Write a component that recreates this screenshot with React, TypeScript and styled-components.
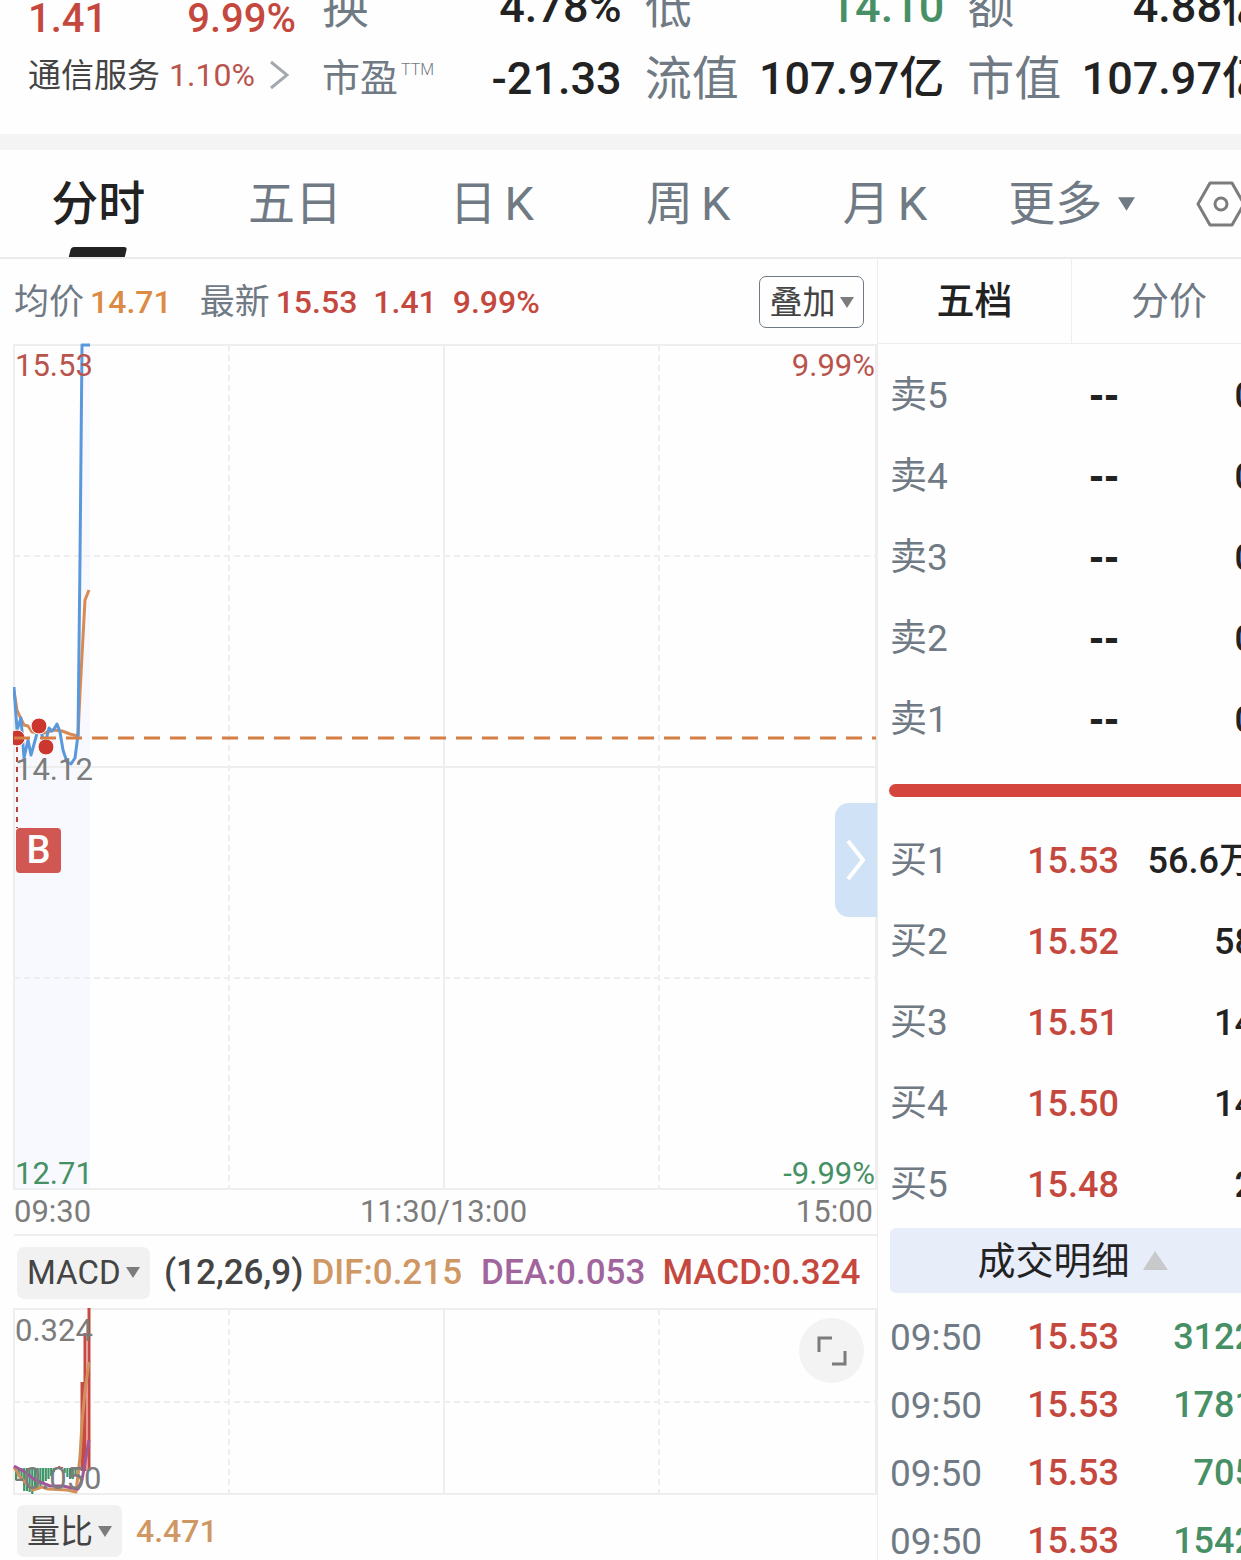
import React, { useState } from "react";
import styled, { createGlobalStyle } from "styled-components";

const color = {
  ink: "#222222",
  text: "#444444",
  slate: "#707a84",
  grey: "#7c7c7c",
  red: "#c5483f",
  redSoft: "#b9544d",
  green: "#479065",
  orange: "#dc8b45",
  tan: "#cf9763",
  purple: "#9f659c",
  blue: "#5a98dc",
  line: "#eeeeee",
};

const GlobalStyle = createGlobalStyle`
  * { box-sizing: border-box; }
  body { margin: 0; background: #fefefe; }
  body, button, select {
    font-family: Roboto, "Noto Sans CJK SC", sans-serif;
    line-height: 1;
  }
  button, select {
    border: 0; margin: 0; padding: 0; background: none; color: inherit; cursor: pointer;
  }
`;

const Viewport = styled.div`
  height: 100vh;
  overflow: hidden;
  background: #fefefe;
`;

/* The sheet bleeds past the right edge of the window. */
const Sheet = styled.div`
  width: calc(100% + 39px);
`;

const Header = styled.header`
  height: 134px;
  overflow: hidden;
  display: grid;
  grid-template-columns: 271px repeat(3, minmax(0, 1fr));
  column-gap: 23px;
  align-items: end;
  align-content: end;
  padding: 0 13px 20px 28px;
`;

const Quote = styled.div`
  padding-bottom: 11px;
`;

const QuoteRow = styled.div`
  display: flex;
  align-items: center;
  justify-content: space-between;
  height: 56px;
  padding-right: 3px;
  font-size: 40px;
  font-weight: 500;
  color: ${color.red};
`;

const Sector = styled.a`
  display: flex;
  align-items: center;
  height: 56px;
  gap: 9px;
  font-size: 33px;
  color: ${color.text};
  text-decoration: none;
  white-space: nowrap;
`;

const SectorChange = styled.span`
  font-size: 32px;
  color: ${color.redSoft};
`;

const Chevron = styled.svg`
  width: 20px;
  height: 30px;
  margin-left: 5px;
`;

const Stats = styled.dl`
  margin: 0;
`;

const Stat = styled.div`
  display: flex;
  align-items: center;
  justify-content: space-between;
  height: 72px;
  white-space: nowrap;
`;

const StatName = styled.dt<{ $small?: boolean }>`
  font-size: ${(p) => (p.$small ? 38 : 47)}px;
  color: ${color.slate};
`;

const Sup = styled.sup`
  font-size: 16px;
  font-weight: 300;
  line-height: 16px;
  vertical-align: 16px;
  margin-left: 3px;
`;

const StatValue = styled.dd<{ $tone?: string }>`
  margin: 0;
  font-size: 45px;
  font-weight: 500;
  color: ${(p) => p.$tone ?? color.ink};
`;

const Divider = styled.div`
  height: 16px;
  background: #f4f4f4;
`;

const Tabs = styled.nav`
  display: grid;
  grid-template-columns: repeat(6, minmax(0, 1fr)) 82px;
  height: 109px;
  padding-right: 18px;
  border-bottom: 2px solid #ebebeb;
`;

const Tab = styled.button<{ $on: boolean; $menu: boolean }>`
  position: relative;
  display: flex;
  align-items: center;
  justify-content: center;
  gap: ${(p) => (p.$menu ? 16 : 8)}px;
  padding-right: ${(p) => (p.$menu ? 20 : 0)}px;
  font-size: 47px;
  font-weight: ${(p) => (p.$on ? 500 : 400)};
  color: ${(p) => (p.$on ? color.ink : color.slate)};
  white-space: nowrap;

  &::after {
    content: "";
    visibility: ${(p) => (p.$on ? "visible" : "hidden")};
    position: absolute;
    bottom: 0;
    left: 50%;
    width: 56px;
    height: 10px;
    margin-left: -28px;
    border-radius: 3px 3px 0 0;
    transform: skewX(-14deg);
    background: ${color.ink};
  }
`;

const Settings = styled.button`
  display: flex;
  align-items: center;
  justify-content: center;
`;

const Main = styled.main`
  display: grid;
  grid-template-columns: minmax(0, 1fr) 402px;
`;

const Charts = styled.section`
  position: relative;
  min-width: 0;
  padding-left: 14px;
  border-right: 1px solid ${color.line};
`;

const InfoRow = styled.div`
  display: flex;
  align-items: center;
  height: 86px;
  padding-right: 13px;
  font-size: 32px;
  font-weight: 500;
  color: ${color.red};
  white-space: nowrap;
`;

const InfoName = styled.span`
  margin-right: 6px;
  font-size: 35px;
  font-weight: 400;
  color: ${color.slate};
`;

const InfoValue = styled.span<{ $tone?: string; $gap?: number }>`
  color: ${(p) => p.$tone ?? color.red};
  margin-right: ${(p) => p.$gap ?? 16}px;
`;

const Overlay = styled.button`
  display: flex;
  align-items: center;
  justify-content: center;
  gap: 4px;
  width: 105px;
  height: 52px;
  margin-left: auto;
  border: 1px solid ${color.slate};
  border-radius: 7px;
  font-size: 33px;
  color: ${color.text};
`;

const Plot = styled.div`
  position: relative;
`;

const PlotSvg = styled.svg`
  display: block;
  width: 100%;
  height: auto;
  overflow: visible;
`;

const PlotLabel = styled.span<{ $top?: number; $right?: boolean; $tone?: string }>`
  position: absolute;
  ${(p) => (p.$top === undefined ? "bottom: -2px;" : `top: ${p.$top}px;`)}
  ${(p) => (p.$right ? "right: 2px;" : "left: 1px;")}
  font-size: 31px;
  line-height: 36px;
  color: ${(p) => p.$tone ?? color.grey};
`;

const BuyMark = styled.span`
  position: absolute;
  top: 483px;
  left: 2px;
  width: 45px;
  height: 45px;
  border-radius: 4px;
  background: #d15852;
  color: #fff;
  font-size: 38px;
  font-weight: 500;
  line-height: 45px;
  text-align: center;
`;

const Handle = styled.button`
  position: absolute;
  top: 458px;
  right: 0;
  width: 42px;
  height: 114px;
  display: flex;
  align-items: center;
  justify-content: center;
  border-radius: 14px 0 0 14px;
  background: #cfe2f6;
`;

const TimeAxis = styled.div`
  display: flex;
  justify-content: space-between;
  height: 46px;
  padding-right: 4px;
  border-bottom: 2px solid ${color.line};
  font-size: 31px;
  line-height: 44px;
  color: ${color.grey};
`;

const IndicatorRow = styled.div<{ $last?: boolean }>`
  display: flex;
  align-items: center;
  height: ${(p) => (p.$last ? 72 : 73)}px;
  padding-left: 3px;
  font-size: ${(p) => (p.$last ? 32 : 35)}px;
  font-weight: 500;
  white-space: nowrap;
`;

const Picker = styled.label`
  position: relative;
  display: flex;
  align-items: center;
  height: 52px;
  margin-right: 14px;
  border-radius: 7px;
  background: #f1f1f1;
`;

const PickerSelect = styled.select`
  appearance: none;
  height: 52px;
  padding: 0 29px 0 10px;
  font-size: 33px;
  color: ${color.text};
`;

const PickerArrow = styled.span`
  position: absolute;
  right: 10px;
  display: flex;
  pointer-events: none;
`;

const Reading = styled.span<{ $tone: string; $gap: number }>`
  color: ${(p) => p.$tone};
  margin-right: ${(p) => p.$gap}px;
`;

const Expand = styled.button`
  position: absolute;
  top: 9px;
  right: 13px;
  width: 65px;
  height: 65px;
  display: flex;
  align-items: center;
  justify-content: center;
  border-radius: 50%;
  background: #f3f3f3;
`;

const Book = styled.aside`
  min-width: 0;
`;

const BookTabs = styled.div`
  display: grid;
  grid-template-columns: 194px 194px;
  height: 85px;
  border-bottom: 1px solid ${color.line};
`;

const BookTab = styled.button<{ $on: boolean }>`
  border-right: ${(p) => (p.$on ? `1px solid ${color.line}` : "0")};
  font-size: 38px;
  font-weight: ${(p) => (p.$on ? 500 : 400)};
  color: ${(p) => (p.$on ? color.ink : color.slate)};
`;

const BookBody = styled.div`
  padding: 11px 25px 0 12px;
`;

const Rows = styled.table<{ $pitch: number }>`
  width: 100%;
  table-layout: fixed;
  border-collapse: collapse;
  font-size: 36px;

  tr { height: ${(p) => p.$pitch}px; }
  th, td { padding: 0; text-align: right; font-weight: 500; white-space: nowrap; }
  th { width: 100px; text-align: left; font-size: 37px; font-weight: 400; color: ${color.slate}; }
`;

const Price = styled.td<{ $blank?: boolean }>`
  width: 129px;
  color: ${(p) => (p.$blank ? color.ink : color.red)};
`;

const Blank = styled.span`
  font-family: "DejaVu Sans", sans-serif;
  font-weight: 700;
`;

const Volume = styled.td<{ $tone?: string }>`
  width: 136px;
  color: ${(p) => p.$tone ?? color.ink};
`;

const Balance = styled.div`
  height: 13px;
  margin: 24px -25px 23px -1px;
  border-radius: 7px 0 0 7px;
  background: #d4453d;
`;

const Detail = styled.button`
  display: flex;
  align-items: center;
  justify-content: center;
  gap: 13px;
  width: 100%;
  height: 65px;
  margin: 3px 0 10px;
  border-radius: 6px;
  background: #e8edfa;
  font-size: 38px;
  color: ${color.ink};
`;

function Triangle({ size = 14, fill = color.grey }: { size?: number; fill?: string }) {
  return (
    <svg width={size} height={size - 3} viewBox="0 0 14 11" aria-hidden="true">
      <path d="M0 0H14L7 11Z" fill={fill} />
    </svg>
  );
}

function Grid({ height, rows }: { height: number; rows: { y: number; solid?: boolean }[] }) {
  const dash = "6 4";
  return (
    <g fill="none" stroke={color.line} strokeWidth="2">
      <path d={`M0 0H862V${height}H0Z`} />
      <path d={`M430 0V${height}`} />
      <path d={`M215 0V${height}M645 0V${height}`} strokeDasharray={dash} />
      {rows.map((r) => (
        <path key={r.y} d={`M0 ${r.y}H862`} strokeDasharray={r.solid ? undefined : dash} />
      ))}
    </g>
  );
}

const priceLine =
  "M0 342L3 385L7 373L10 413L14 395L17 410L22 392L25 381L31 399L35 383L38 386L40 384L43 379L46 387L49 405L53 417L57 419L61 413L64 390L66 215L68 0";
const averageLine =
  "M0 346L3 365L7 374L10 380L14 381L18 387L30 388L40 385L48 386L56 389L64 391L66 348L69 292L71 255L75 245";

function PriceChart() {
  return (
    <PlotSvg viewBox="0 0 863 845" role="img" aria-label="分时">
      <path d={`${priceLine}H76V844H0Z`} fill="#f8f9fe" />
      <Grid height={844} rows={[{ y: 211 }, { y: 422, solid: true }, { y: 633 }]} />
      <clipPath id="plot"><rect x="-1" y="-2" width="864" height="848" /></clipPath>
      <g fill="none" clipPath="url(#plot)">
        <path d={averageLine} stroke="#d98a52" strokeWidth="3" strokeLinejoin="round" />
        <path d={`${priceLine}H76`} stroke={color.blue} strokeWidth="3" strokeLinejoin="round" />
        <g fill="#cb372e" stroke="#fff" strokeWidth="1">
          <circle cx="3" cy="393" r="8" />
          <circle cx="25" cy="381" r="8" />
          <circle cx="32" cy="402" r="8" />
        </g>
        <path d="M0 393H862" stroke="#d47f43" strokeWidth="3" strokeDasharray="16 10" />
        <path d="M3 402V483" stroke="#b8433d" strokeWidth="2" strokeDasharray="5 5" />
      </g>
    </PlotSvg>
  );
}

const histogram = [
  12, 9, 13, 23, 23, 24, 26, 21, 22, 18, 15, 13, 11, 8, 4, -1, -2, -1, 5, 9, 11, 11, 8, 8,
];

function MacdChart() {
  return (
    <PlotSvg viewBox="0 0 863 186" role="img" aria-label="MACD">
      <Grid height={185} rows={[{ y: 93 }]} />
      {histogram.map((v, i) => (
        <rect
          key={i}
          x={1 + i * 2.7}
          y={v < 0 ? 159 + v : 159}
          width="2.2"
          height={Math.abs(v)}
          fill={v < 0 ? color.red : "#3f9567"}
        />
      ))}
      <path d="M68 162V73M71 162V24M75 162V-1" stroke="#c64a42" strokeWidth="3" />
      <path d="M73 162V60" stroke="#f08a80" strokeWidth="1" />
      <g fill="none" strokeWidth="3" strokeLinejoin="round">
        <path d="M0 158L6 168L19 181L28 178L34 180L53 181L62 183L66 148L68 114L71 81L75 53" stroke="#d0905a" />
        <path d="M0 157L11 163L21 171L36 177L49 177L58 179L64 180L68 171L71 154L75 131" stroke="#a0589a" />
      </g>
    </PlotSvg>
  );
}

const tabNames = ["分时", "五日", "日K", "周K", "月K", "更多"];

const asks = ["卖5", "卖4", "卖3", "卖2", "卖1"];

const bids = [
  ["买1", "15.53", "56.6万"],
  ["买2", "15.52", "58"],
  ["买3", "15.51", "14"],
  ["买4", "15.50", "14"],
  ["买5", "15.48", "2"],
];

const trades = ["3122", "1781", "705", "1542"];

export default function App() {
  const [tab, setTab] = useState("分时");
  const [bookTab, setBookTab] = useState("五档");

  return (
    <Viewport>
      <GlobalStyle />
      <Sheet>
        <Header>
          <Quote>
            <QuoteRow>
              <span>1.41</span>
              <span>9.99%</span>
            </QuoteRow>
            <Sector href="#sector">
              通信服务
              <SectorChange>1.10%</SectorChange>
              <Chevron viewBox="0 0 20 30" fill="none" stroke="#a3a9af" strokeWidth="3" aria-hidden="true">
                <path d="M2 2L18 15L2 28" />
              </Chevron>
            </Sector>
          </Quote>
          <Stats>
            <Stat><StatName>换</StatName><StatValue>4.78%</StatValue></Stat>
            <Stat><StatName $small>市盈<Sup>TTM</Sup></StatName><StatValue>-21.33</StatValue></Stat>
          </Stats>
          <Stats>
            <Stat><StatName>低</StatName><StatValue $tone={color.green}>14.10</StatValue></Stat>
            <Stat><StatName>流值</StatName><StatValue>107.97亿</StatValue></Stat>
          </Stats>
          <Stats>
            <Stat><StatName>额</StatName><StatValue>4.88亿</StatValue></Stat>
            <Stat><StatName>市值</StatName><StatValue>107.97亿</StatValue></Stat>
          </Stats>
        </Header>
        <Divider />
        <Tabs>
          {tabNames.map((name) => (
            <Tab key={name} $on={name === tab} $menu={name === "更多"} onClick={() => setTab(name)}>
              {name.endsWith("K") ? <><span>{name[0]}</span><span>K</span></> : name}
              {name === "更多" && <Triangle size={17} fill={color.slate} />}
            </Tab>
          ))}
          <Settings aria-label="设置">
            <svg width="50" height="46" viewBox="0 0 50 46" fill="none" stroke="#7c7c7c" strokeWidth="3">
              <path d="M14 2H36L48 23L36 44H14L2 23Z" strokeLinejoin="round" />
              <circle cx="25" cy="23" r="6" />
            </svg>
          </Settings>
        </Tabs>
        <Main>
          <Charts>
            <InfoRow>
              <InfoName>均价</InfoName>
              <InfoValue $tone={color.orange} $gap={28}>14.71</InfoValue>
              <InfoName>最新</InfoName>
              <InfoValue>15.53</InfoValue>
              <InfoValue>1.41</InfoValue>
              <InfoValue>9.99%</InfoValue>
              <Overlay aria-haspopup="menu">叠加<Triangle /></Overlay>
            </InfoRow>
            <Plot>
              <PriceChart />
              <PlotLabel $top={3} $tone={color.redSoft}>15.53</PlotLabel>
              <PlotLabel $top={3} $right $tone={color.redSoft}>9.99%</PlotLabel>
              <PlotLabel $top={407}>14.12</PlotLabel>
              <PlotLabel $tone={color.green}>12.71</PlotLabel>
              <PlotLabel $right $tone={color.green}>-9.99%</PlotLabel>
              <BuyMark>B</BuyMark>
              <Handle aria-label="收起">
                <svg width="20" height="42" viewBox="0 0 20 42" fill="none" stroke="#fff" strokeWidth="4">
                  <path d="M2 2L17 21L2 40" />
                </svg>
              </Handle>
            </Plot>
            <TimeAxis>
              <span>09:30</span>
              <span>11:30/13:00</span>
              <span>15:00</span>
            </TimeAxis>
            <IndicatorRow>
              <Picker>
                <PickerSelect aria-label="指标" defaultValue="MACD"><option>MACD</option></PickerSelect>
                <PickerArrow><Triangle /></PickerArrow>
              </Picker>
              <Reading $tone={color.text} $gap={8}>(12,26,9)</Reading>
              <Reading $tone={color.tan} $gap={19}>DIF:0.215</Reading>
              <Reading $tone={color.purple} $gap={17}>DEA:0.053</Reading>
              <Reading $tone={color.red} $gap={0}>MACD:0.324</Reading>
            </IndicatorRow>
            <Plot>
              <MacdChart />
              <PlotLabel $top={4}>0.324</PlotLabel>
              <PlotLabel $top={152}>-0.050</PlotLabel>
              <Expand aria-label="全屏">
                <svg width="30" height="30" viewBox="0 0 30 30" fill="none" stroke="#7c7c7c" strokeWidth="3">
                  <path d="M2 16V2H15M28 15V28H15" />
                </svg>
              </Expand>
            </Plot>
            <IndicatorRow $last>
              <Picker>
                <PickerSelect aria-label="副图指标" defaultValue="量比"><option>量比</option></PickerSelect>
                <PickerArrow><Triangle /></PickerArrow>
              </Picker>
              <Reading $tone={color.tan} $gap={0}>4.471</Reading>
            </IndicatorRow>
          </Charts>
          <Book>
            <BookTabs>
              {["五档", "分价"].map((name) => (
                <BookTab key={name} $on={name === bookTab} onClick={() => setBookTab(name)}>{name}</BookTab>
              ))}
            </BookTabs>
            <BookBody>
              <Rows $pitch={81}>
                <tbody>
                  {asks.map((name) => (
                    <tr key={name}>
                      <th scope="row">{name}</th>
                      <Price $blank><Blank>--</Blank></Price>
                      <Volume>0</Volume>
                    </tr>
                  ))}
                </tbody>
              </Rows>
              <Balance />
              <Rows $pitch={81}>
                <tbody>
                  {bids.map(([name, price, volume]) => (
                    <tr key={name}>
                      <th scope="row">{name}</th>
                      <Price>{price}</Price>
                      <Volume>{volume}</Volume>
                    </tr>
                  ))}
                </tbody>
              </Rows>
              <Detail>成交明细<svg width="25" height="19" viewBox="0 0 25 19" aria-hidden="true"><path d="M12 0L25 19H0Z" fill="#c8c9cb" /></svg></Detail>
              <Rows $pitch={68}>
                <tbody>
                  {trades.map((volume) => (
                    <tr key={volume}>
                      <th scope="row">09:50</th>
                      <Price>15.53</Price>
                      <Volume $tone={color.green}>{volume}</Volume>
                    </tr>
                  ))}
                </tbody>
              </Rows>
            </BookBody>
          </Book>
        </Main>
      </Sheet>
    </Viewport>
  );
}
